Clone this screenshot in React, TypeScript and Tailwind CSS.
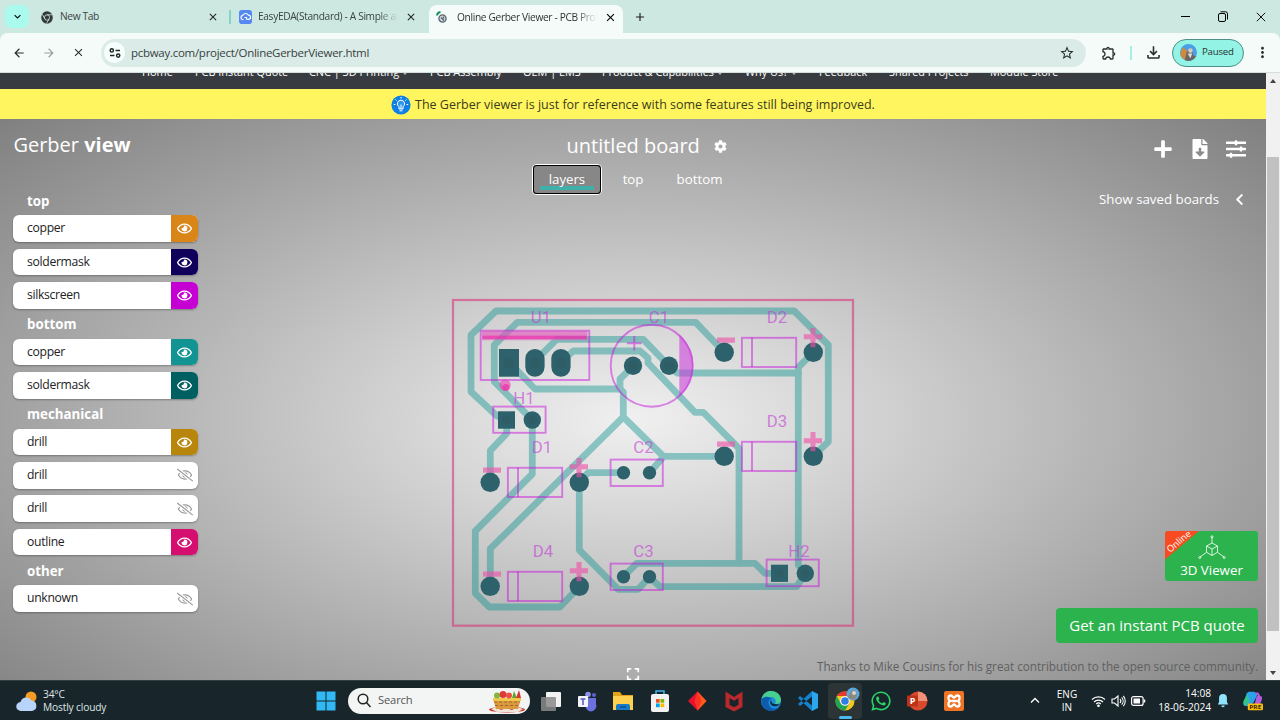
import React from "react";
import { FaCog, FaPlus, FaFileDownload, FaSlidersH, FaExpand, FaChevronLeft, FaWhatsapp, FaRegEye, FaRegEyeSlash } from "react-icons/fa";
import { MdArrowBack, MdArrowForward, MdClose, MdStarBorder, MdOutlineExtension, MdOutlineFileDownload, MdMoreVert, MdExpandMore, MdAdd } from "react-icons/md";

function ChromeGlyph() {
  return (
    <svg width="12" height="13" viewBox="0 0 24 24" preserveAspectRatio="none">
      <circle cx="12" cy="12" r="11.5" fill="#33393a" />
      <g stroke="#cde8e2" strokeWidth="1.6" fill="none">
        <circle cx="12" cy="12" r="5" />
        <path d="M12 7H22M7.7 14.5L2.5 6M16.3 14.5L11 23" />
      </g>
      <circle cx="12" cy="12" r="3.2" fill="#33393a" />
    </svg>
  );
}

function TabBar() {
  return (
    <div className="flex h-[33px] shrink-0 items-start bg-[#cde7e1] text-[10.2px] tracking-[-0.35px] text-[#3b4444]">
      <div className="mt-[5px] ml-[5px] flex h-[23px] w-[24px] items-center justify-center rounded-[7px] bg-[#abfaee] text-black">
        <MdExpandMore size={13} />
      </div>
      <div className="ml-[12px] flex h-[34px] w-[178px] items-center">
        <ChromeGlyph />
        <span className="ml-[7px] flex-1">New Tab</span>
        <MdClose size={12} className="text-[#222]" />
      </div>
      <div className="mt-[10px] ml-[10px] h-[14px] w-[2px] bg-[#7fd6c9]" />
      <div className="ml-[8px] flex h-[34px] w-[178px] items-center">
        <svg width="13" height="14" viewBox="0 0 13 15" preserveAspectRatio="none">
          <rect width="13" height="15" rx="3" fill="#5588f2" />
          <path d="M4.500 10.500H4a2.400 2.400 0 0 1-.300-4.700 3.100 3.100 0 0 1 5.700-.300 2.300 2.300 0 0 1 .600 4.500H7.500M5.500 8h2.500M7.500 10v-2" fill="none" stroke="#fff" strokeWidth="1.200" />
        </svg>
        <span className="ml-[6px] w-[140px] overflow-hidden whitespace-nowrap [mask-image:linear-gradient(to_right,black_120px,transparent)]">EasyEDA(Standard) - A Simple and</span>
        <MdClose size={12} className="ml-auto text-[#222]" />
      </div>
      <div className="mt-[5px] ml-[12px] flex h-[28px] w-[194px] items-center rounded-t-[8px] bg-[#f4fbf8] pb-[3px] pl-[7px] text-[#2c3535]">
        <svg width="13" height="14" viewBox="0 0 13 14">
          <circle cx="6.500" cy="7.500" r="3.600" fill="#ccd6dd" stroke="#59626d" strokeWidth="1.300" />
          <path d="M5 6.500l3 3M8 5.500l-1 2" stroke="#59626d" strokeWidth="1.200" />
          <path d="M1 4.500A4 4 0 0 1 4.500 1" fill="none" stroke="#128f62" strokeWidth="2" />
        </svg>
        <span className="ml-[8px] w-[140px] overflow-hidden whitespace-nowrap [mask-image:linear-gradient(to_right,black_118px,transparent)]">Online Gerber Viewer - PCB Prototype</span>
        <MdClose size={13} className="ml-[7px] text-black" />
      </div>
      <MdAdd size={14} className="mt-[10px] ml-[10px] text-[#222]" />
      <div className="mt-[10px] mr-[14px] ml-auto flex h-[13px] items-center gap-[28px] text-black">
        <div className="h-px w-[9px] bg-black" />
        <svg width="10" height="11" viewBox="0 0 10 11" fill="none" stroke="#000">
          <rect x="0.5" y="2.5" width="7" height="8" rx="1.5" />
          <path d="M2.5 0.8H7.5a2 2 0 0 1 2 2V8.5" />
        </svg>
        <svg width="10" height="10" viewBox="0 0 10 10" stroke="#111" strokeWidth="1"><path d="M.8.8l8.4 8.4M9.2.8L.8 9.2" /></svg>
      </div>
    </div>
  );
}

function Avatar({ size }: { size: number }) {
  return (
    <svg width={size} height={size} viewBox="0 0 18 18">
      <circle cx="9" cy="9" r="9" fill="#4aa0e6" />
      <path d="M1 13a9 9 0 0 1 2-9l4 2 1 6-3 5z" fill="#d08a3c" />
      <path d="M5 17l2-8 3-4 3 3 1 4 3 1a9 9 0 0 1-12 4z" fill="#6b6664" />
      <circle cx="11" cy="7" r="2.4" fill="#d9c9bb" />
      <path d="M8 10l3 5 2-5z" fill="#d8dcdc" />
    </svg>
  );
}

function Toolbar() {
  return (
    <div className="shrink-0 bg-[#cde7e1]">
      <div className="flex h-[40px] items-center rounded-t-[7px] border-b border-[#d6dedc] bg-[#f4fbf8] text-[#27302f]">
        <div className="ml-[12px] flex w-[73px] items-center justify-between">
          <MdArrowBack size={14} />
          <MdArrowForward size={14} className="text-[#98a19f]" />
          <MdClose size={13} />
        </div>
        <div className="ml-[16px] flex h-[28px] w-[985px] shrink-0 items-center rounded-full bg-[#dbece8] pr-[11px] pl-[3px]">
          <div className="flex h-[21px] w-[21px] items-center justify-center rounded-full bg-[#f7fffc]">
            <svg width="12" height="10" viewBox="0 0 12 10" fill="none" stroke="#1f2827" strokeWidth="1.5">
              <circle cx="2.8" cy="2.4" r="1.6" /><path d="M6.5 2.4H11M1 7.6H5.5" /><circle cx="9.2" cy="7.6" r="1.6" />
            </svg>
          </div>
          <span className="ml-[6px] flex-1 pt-px text-[11.5px] tracking-[-0.28px] text-[#38413f]">pcbway.com/project/OnlineGerberViewer.html</span>
          <MdStarBorder size={16} />
        </div>
        <MdOutlineExtension size={16} className="ml-[15px]" />
        <div className="ml-[13px] h-[14px] w-[2px] bg-[#a5efe4]" />
        <MdOutlineFileDownload size={19} className="ml-[12px]" />
        <div className="ml-[9px] flex h-[28px] w-[72px] items-center rounded-full border border-[#4f8f88] bg-[#93f3e5] pl-[7px] text-[9.6px] tracking-[-0.2px]">
          <Avatar size={17} />
          <span className="ml-[5px]">Paused</span>
        </div>
        <MdMoreVert size={17} className="ml-[10px]" />
      </div>
    </div>
  );
}

const nav: [string, boolean][] = [
  ["Home", false], ["PCB Instant Quote", false], ["CNC | 3D Printing", true], ["PCB Assembly", false],
  ["OEM | EMS", false], ["Product & Capabilities", true], ["Why Us?", true], ["Feedback", false],
  ["Shared Projects", false], ["Module Store", false],
];

function SiteNav() {
  return (
    <div className="grid h-[16px] shrink-0 grid-cols-[142px_53px_114px_121px_93px_79px_143px_74px_70px_101px_1fr] overflow-hidden bg-[#383c40] text-[10.9px] text-white">
      <span />
      {nav.map(([t, arrow]) => (
        <div key={t} className="-mt-[9px] whitespace-nowrap leading-[16px]">
          {t}{arrow && <span className="ml-[4px] inline-block h-[4px] w-[4px] -translate-y-[2px] rotate-45 border-r border-b border-[#bbb]" />}
        </div>
      ))}
    </div>
  );
}

function Notice() {
  return (
    <div className="flex h-[30px] shrink-0 items-center bg-[#fff65f] pt-px pl-[391px] text-[12.5px] text-[#3d3b1c]">
      <svg width="20" height="20" viewBox="0 0 20 20">
        <circle cx="10" cy="10" r="9.6" fill="#0f80e6" />
        <path d="M10 5.200a3.600 3.600 0 0 0-2 6.600v2.200h4v-2.200a3.600 3.600 0 0 0-2-6.600z" fill="#2f95ea" stroke="#fff" strokeWidth="1" />
        <path d="M10 14V9.500M8.500 15.800h3M10 2v1.600M4.500 4.500l1.100 1.100M15.500 4.500l-1.100 1.100M2.800 9.500h1.600M15.600 9.500h1.600" stroke="#fff" strokeWidth="1" />
      </svg>
      <span className="ml-[4px] pt-px">The Gerber viewer is just for reference with some features still being improved.</span>
    </div>
  );
}

type Layer = { name: string; color: string | null };
const groups: { title: string; layers: Layer[] }[] = [
  { title: "top", layers: [{ name: "copper", color: "bg-[#d98517]" }, { name: "soldermask", color: "bg-[#10005c]" }, { name: "silkscreen", color: "bg-[#c400d2]" }] },
  { title: "bottom", layers: [{ name: "copper", color: "bg-[#129592]" }, { name: "soldermask", color: "bg-[#005f61]" }] },
  { title: "mechanical", layers: [{ name: "drill", color: "bg-[#b8860b]" }, { name: "drill", color: null }, { name: "drill", color: null }, { name: "outline", color: "bg-[#d50f70]" }] },
  { title: "other", layers: [{ name: "unknown", color: null }] },
];

function Sidebar() {
  return (
    <div className="flex w-[452px] shrink-0 flex-col pl-[13.4px]">
      <h1 className="mt-[12px] h-[27px] text-[20px] leading-[27px] text-white">Gerber <b>view</b></h1>
      <div className="mt-[34px] flex w-[184.6px] flex-col">
        {groups.map((g) => (
          <div key={g.title}>
            <div className="h-[23.4px] pl-[13.6px] text-[13.3px] leading-[18px] font-bold text-white">{g.title}</div>
            {g.layers.map((l, i) => (
              <div key={i} className="mb-[6.66px] flex h-[26.67px] overflow-hidden rounded-[6px] bg-white shadow-[0_1px_2px_rgba(0,0,0,0.3)]">
                <span className="flex-1 pl-[13.6px] text-[12.2px] leading-[26px] tracking-[-0.32px] text-[#222]">{l.name}</span>
                {l.color ? (
                  <div className={"flex w-[26.5px] items-center justify-center text-white " + l.color}><FaRegEye size={15} /></div>
                ) : (
                  <div className="flex w-[26.5px] items-center justify-center text-[#999]"><FaRegEyeSlash size={16} /></div>
                )}
              </div>
            ))}
          </div>
        ))}
      </div>
    </div>
  );
}

const traces = [
  "M506 420L497 416L471 391.7V335L496 311H794.3L828.3 345V441.7L813.3 456",
  "M724 352L695.7 322.3H517.3L494.3 345V381.7L532.3 420V474L475.3 531V593.3L489.3 607H560L579.3 586.7",
  "M509 362L535 389H620L623.3 392V417L490.3 548.7V586",
  "M633 366L620 379V389",
  "M623.3 417L663.3 456.3H724M663.3 457L649.5 472.7",
  "M535 361L556.7 339.3H643.3L669 366L677 373H798.3V565L805.5 573L796.7 586.7H660L649.3 577L638.3 589.3H618.3L579.3 550V482L588.3 472.7H623.5",
  "M798.3 373V367.3L813.3 352.3",
  "M561 362L573.3 351H640L648 358V363L695 412.3H703.3L739 448.3V563.3",
  "M623.5 576.7L636.7 563.3H755L765 573.3H779",
  "M506.7 420V433.3L490.3 450.7V482",
];

const diodes = [
  { name: "D1", dx: -234, dy: 130 }, { name: "D2", dx: 0, dy: 0 },
  { name: "D3", dx: 0, dy: 104 }, { name: "D4", dx: -234, dy: 234 },
];

const labels: [string, number, number][] = [
  ["U1", 541, 317.7], ["C1", 659, 317.7], ["D2", 777, 317.7], ["H1", 524, 398], ["D3", 777, 421.7],
  ["D1", 542, 447.7], ["C2", 643.5, 447.7], ["D4", 543, 551.7], ["C3", 643.5, 551.7], ["H2", 799, 551.7],
];

function Board() {
  return (
    <svg width="410" height="336" viewBox="448 295 410 336">
      <rect x="453" y="300" width="400" height="325.7" fill="none" stroke="#d93a7c" strokeOpacity="0.62" strokeWidth="2.2" />
      <g opacity="0.43" fill="none" stroke="#0f9490" strokeWidth="6.8" strokeLinejoin="round" strokeLinecap="round">
        {traces.map((d) => <path key={d} d={d} />)}
      </g>
      <g fill="#2d626d">
        <rect x="499" y="349" width="20" height="27.7" />
        <rect x="525.3" y="349" width="19.3" height="27.7" rx="9.6" />
        <rect x="551.3" y="349" width="19.3" height="27.7" rx="9.6" />
        <circle cx="633" cy="365.7" r="9.2" /><circle cx="669" cy="365.7" r="9.2" />
        <rect x="498" y="411.3" width="17" height="17.4" /><circle cx="532.3" cy="420" r="8.7" />
        <rect x="771" y="564.7" width="17" height="17.2" /><circle cx="805.3" cy="573.3" r="8.7" />
        {[472.7, 576.7].map((y) => <g key={y}><circle cx="623.5" cy={y} r="6.7" /><circle cx="649.5" cy={y} r="6.7" /></g>)}
        {diodes.map((d) => <g key={d.name}><circle cx={724.2 + d.dx} cy={352.3 + d.dy} r="9.7" /><circle cx={813.3 + d.dx} cy={352.3 + d.dy} r="9.7" /></g>)}
      </g>
      <g fill="#2f5d66">
        <circle cx="509" cy="362.7" r="5.5" /><circle cx="535" cy="362.7" r="5.5" /><circle cx="561" cy="362.7" r="5.5" />
        <circle cx="633" cy="365.7" r="5" /><circle cx="669" cy="365.7" r="5" />
        <circle cx="506.5" cy="420" r="4.5" /><circle cx="532.3" cy="420" r="4.5" />
        <circle cx="779.5" cy="573.3" r="4.5" /><circle cx="805.3" cy="573.3" r="4.5" />
      </g>
      <g fill="none" stroke="#c814dc" strokeOpacity="0.5" strokeWidth="1.9">
        <rect x="480.7" y="330.7" width="108.6" height="49.3" />
        <circle cx="651.7" cy="365.7" r="41" />
        <path d="M634.3 336V350.6M627 343.3H641.6" />
        <rect x="493.2" y="406.6" width="52.4" height="26.2" />
        <rect x="766.6" y="559.6" width="52.2" height="26.6" />
        <rect x="610.6" y="459.6" width="52.2" height="26.4" />
        <rect x="610.6" y="563.6" width="52.2" height="26.4" />
        {diodes.map((d) => <g key={d.name}><rect x={741.9 + d.dx} y={337.8 + d.dy} width="54.3" height="29.2" /><path d={`M${752 + d.dx} ${337.8 + d.dy}v29.2`} /></g>)}
      </g>
      <path d="M679.3 334.5A41.8 41.8 0 0 1 679.3 396.9Z" fill="#cc35dc" fillOpacity="0.55" />
      <rect x="482" y="331" width="105.5" height="9.2" fill="#e454bc" fillOpacity="0.6" />
      <rect x="482.5" y="335.6" width="104" height="3.4" fill="#ef26a8" fillOpacity="0.6" />
      <circle cx="505" cy="385" r="5.7" fill="#ec45b4" fillOpacity="0.65" />
      <circle cx="506" cy="387.5" r="3.5" fill="#f222a6" fillOpacity="0.6" />
      <g fill="#ee4fa8" fillOpacity="0.62">
        {diodes.map((d) => (
          <g key={d.name}>
            <rect x={717 + d.dx} y={337.5 + d.dy} width="18" height="5.2" />
            <path d={`M${810.5 + d.dx} ${328 + d.dy}h5v6.3h6.5v5h-6.5v8h-5v-8h-6.7v-5h6.7z`} />
          </g>
        ))}
      </g>
      <g fill="#c438d6" fillOpacity="0.62" className="font-[Roboto] font-normal" fontSize="16.8" textAnchor="middle">
        {labels.map(([t, x, y]) => <text key={t} x={x} y={y + 5.7}>{t}</text>)}
      </g>
    </svg>
  );
}

function Center() {
  return (
    <div className="flex w-[402px] shrink-0 flex-col">
      <div className="mt-[13px] flex h-[27px] items-center pl-[114.5px] text-[20px] leading-[27px] text-white">
        untitled board
        <FaCog size={13} className="mt-[1px] ml-[14px]" />
      </div>
      <div className="mt-[5px] flex h-[32px] items-center pl-[80px] text-[13.3px] text-white">
        <div className="flex h-[31px] w-[70px] flex-col items-center rounded-[4px] border border-white bg-black p-px">
          <div className="flex h-full w-full flex-col items-center rounded-[3px] bg-[#878787]">
            <div className="mt-[20px] h-[4px] w-[54px] shrink-0 bg-[#3fb0aa]" />
            <span className="-mt-[24px] h-[27px] leading-[27px] tracking-[-0.05px]">layers</span>
          </div>
        </div>
        <span className="w-[62px] pt-px text-center tracking-[-0.05px]">top</span>
        <span className="w-[71px] pt-px text-center">bottom</span>
      </div>
      <div className="mt-[100px] -ml-[4px] w-[410px]"><Board /></div>
      <FaExpand size={14} className="mt-[36px] ml-[174px] shrink-0 text-white" />
    </div>
  );
}

function CubeIcon() {
  return (
    <svg width="28" height="25" viewBox="0 0 28 25" fill="none" stroke="#fff" strokeWidth="0.9" strokeOpacity="0.9" className="shrink-0">
      <path d="M14 8l5.5 3v6.3L14 20.5l-5.500-3.200V11zM8.500 11L14 14l5.500-3M14 14v6.500M14 8V2M8.500 17.300L2 22M19.500 17.300L26 22" />
      <circle cx="14" cy="1.800" r="1" /><circle cx="1.800" cy="22.500" r="1" /><circle cx="26.200" cy="22.500" r="1" />
    </svg>
  );
}

function RightPanel() {
  return (
    <div className="flex min-w-0 flex-1 flex-col items-end pr-[8px] text-white">
      <div className="mt-[19px] mr-[12px] flex h-[22px] items-center gap-[16.5px]">
        <FaPlus size={20} />
        <FaFileDownload size={20} />
        <FaSlidersH size={20} />
      </div>
      <div className="mt-[28px] mr-[12px] flex h-[22px] items-center text-[13.3px]">
        <span className="pt-px">Show saved boards</span> <FaChevronLeft size={13} className="ml-[14px]" />
      </div>
      <div className="relative mt-[321px] flex h-[50px] w-[93px] shrink-0 flex-col items-center overflow-hidden rounded-[3px] bg-[#2db34e] pt-[4px]">
        <svg className="absolute top-0 left-0" width="36" height="30" viewBox="0 0 36 30">
          <path d="M0 0H34L0 28.500Z" fill="#f84b22" />
          <text x="5" y="22" fontSize="9.200" fill="#fff" transform="rotate(-40 5 22)" className="font-['Open_Sans']">Online</text>
        </svg>
        <CubeIcon />
        <span className="text-[13.3px] leading-[21px]">3D Viewer</span>
      </div>
      <div className="mt-[26.500px] flex h-[35px] w-[202px] shrink-0 items-center justify-center rounded-[4px] bg-[#2db34e] text-[15px]">Get an instant PCB quote</div>
      <div className="mt-[13.500px] text-[11.7px] leading-[20px] whitespace-nowrap text-[#606060]">Thanks to Mike Cousins for his great contribution to the open source community.</div>
    </div>
  );
}

function Scrollbar() {
  return (
    <div className="flex w-[14px] shrink-0 flex-col items-center bg-[#f1f1f1]">
      <div className="mt-[6px] h-0 w-0 border-x-[3px] border-b-[4px] border-x-transparent border-b-[#444]" />
      <div className="mt-[74px] h-[474px] w-[12px] bg-[#c1c1c1]" />
      <div className="mt-[40px] h-0 w-0 border-x-[3px] border-t-[4px] border-x-transparent border-t-[#444]" />
    </div>
  );
}

function Taskbar() {
  return (
    <div className="flex h-[40px] shrink-0 items-center border-t border-[#304040] bg-[#18252a] text-white">
      <div className="flex w-[316px] items-center pl-[16px]">
        <svg width="22" height="24" viewBox="0 0 22 24">
          <circle cx="15" cy="8" r="5.500" fill="#f59a23" />
          <path d="M5 22a4.500 4.500 0 0 1-.500-9 6 6 0 0 1 11-1.500A5.300 5.300 0 0 1 16 22z" fill="#b9d4fb" />
        </svg>
        <div className="ml-[5px] text-[10.2px] leading-[13px] tracking-[-0.15px] text-[#dfe5e6]"><div>34°C</div><div>Mostly cloudy</div></div>
      </div>
      <svg width="20" height="20" viewBox="0 0 20 20" fill="#31b9f5"><path d="M.500.500H9.500V9.500H.500zM10.500.500h9V9.500h-9zM.500 10.500h9v9h-9zM10.500 10.500h9v9h-9z" /></svg>
      <div className="ml-[12px] flex h-[26px] w-[182px] shrink-0 items-center rounded-full bg-[#f3f4f4] pr-[4px] pl-[9px] text-[11.2px] tracking-[-0.15px] text-[#555]">
        <svg width="14" height="15" viewBox="0 0 14 15" fill="none" stroke="#222" strokeWidth="1.500"><circle cx="6" cy="6" r="4.800" /><path d="M9.500 9.500l4 4.500" /></svg>
        <span className="ml-[7px] flex-1">Search</span>
        <svg width="38" height="24" viewBox="0 0 38 24">
          <ellipse cx="19" cy="20.500" rx="18" ry="3" fill="#c93b34" />
          <path d="M3 20l5-2 5 3 5-2 6 2 5-3 6 2-5 3H9z" fill="#eee5d8" />
          <path d="M5 9h28l-3 11H8z" fill="#d99a3e" />
          <path d="M6 13h26M7 16.500h24" stroke="#a8642a" strokeDasharray="3 2" />
          <path d="M5 9h28v3H5z" fill="#f0c94c" />
          <circle cx="9" cy="6.500" r="3" fill="#84b83c" /><circle cx="15" cy="5.500" r="3.500" fill="#df3b36" /><circle cx="21" cy="6.500" r="3" fill="#e9523f" />
          <path d="M24 9l2-7 3 7z" fill="#5ca52d" /><path d="M28 9l3-8 2 8z" fill="#d8332e" />
        </svg>
      </div>
      <div className="ml-[7px] flex items-center">
        <svg width="30" height="26" viewBox="0 0 30 26"><rect x="9" y="4" width="15" height="15" rx="1" fill="#f2f2f2" /><rect x="4" y="9" width="15" height="14" rx="1" fill="#8a8a8a" opacity=".85" /></svg>
        <svg className="ml-[9px]" width="22" height="22" viewBox="0 0 22 22"><circle cx="12" cy="4.500" r="2.800" fill="#8b90ea" /><circle cx="18" cy="5" r="2" fill="#5d63cf" /><path d="M8 8h12v6a5 5 0 0 1-10 4z" fill="#6c71dd" /><rect x="2" y="6" width="10" height="11" rx="1" fill="#f4f4ff" /><path d="M4.500 9h5M7 9v6" stroke="#5157c2" strokeWidth="1.500" /></svg>
        <svg className="ml-[14px]" width="22" height="22" viewBox="0 0 22 22"><path d="M1 2h7l2 3h11v15H1z" fill="#e3a21a" /><path d="M1 6h20v14H1z" fill="#ffd04f" /><path d="M4 20v-4a2 2 0 0 1 2-2h10a2 2 0 0 1 2 2v4z" fill="#1879c9" /><path d="M8 17h6" stroke="#0a4f91" strokeWidth="1.500" /></svg>
        <svg className="ml-[15px]" width="22" height="24" viewBox="0 0 22 24"><path d="M7 6V2h8v4" stroke="#41b5ee" strokeWidth="1.500" fill="none" /><rect x="2" y="5" width="18" height="18" rx="2" fill="#f2f2f2" /><path d="M7 10h3.700v3.700H7z" fill="#f05022" /><path d="M11.500 10h3.700v3.700h-3.700z" fill="#7fba00" /><path d="M7 14.500h3.700v3.700H7z" fill="#00a4ef" /><path d="M11.500 14.500h3.700v3.700h-3.700z" fill="#ffb900" /></svg>
        <svg className="ml-[15px]" width="22" height="24" viewBox="0 0 22 24"><path d="M11.500 2.500l9 9.500-9 9.500L2 12z" fill="#e8112f" /><path d="M11.500 2.500l9 9.500-9 9.500z" fill="#ff5a1a" /><path d="M11.500 2.500l4 9.500-4 9.500-3-9.500z" fill="#fb3326" /></svg>
        <svg className="ml-[15px]" width="22" height="24" viewBox="0 0 22 24"><path d="M2.500 2.500l8.500 5.500 8.500-5.500v15.500L11 22.500l-8.500-4.500zM6.500 9v6.800l4.500 2.500 4.500-2.500v-6.800L11 11.800z" fill="#b9282d" fillRule="evenodd" /></svg>
        <svg className="ml-[15px]" width="22" height="24" viewBox="0 0 22 24"><circle cx="11" cy="12" r="10" fill="#1b8fdc" /><path d="M1.500 10C3 4 7 2 11 2c6 0 10 4 10 9 0 3-3 4.500-6 4 2-3 0-7-4-7-5 0-8 2-9.500 2z" fill="#48cf8e" /><path d="M1.500 10c4-4 9-2 10 0-4 0-4 6 0 9 3 1.500 6 0 8-1-4 5-10 5-14 2-3-2-4.500-6-4-10z" fill="#0d5cae" /><path d="M12 10c-2 2 0 5 3 5l5 .500C17 18 12 18 10.500 15c-1-2 0-4 1.500-5z" fill="#102e42" /></svg>
        <svg className="ml-[15px]" width="22" height="24" viewBox="0 0 22 24"><path d="M15 2l6 3v14l-6 3z" fill="#2ba6ee" /><path d="M15 2L1 15l2 2L15 7.500zM15 22L1 9l2-2 12 9.500z" fill="#1282cc" /></svg>
      </div>
      <div className="ml-[9px] flex h-[36px] w-[34px] shrink-0 flex-col items-center rounded-[4px] bg-[#2c3436] pt-[6px]">
        <svg width="26" height="24" viewBox="0 0 26 24" className="-mt-[2px] ml-[4px] shrink-0">
          <circle cx="11" cy="14" r="9.500" fill="#f7c51e" />
          <path d="M2.800 9A9.500 9.500 0 0 1 19.200 9H11z" fill="#e33b2e" />
          <path d="M2.800 9A9.500 9.500 0 0 0 11 23.500l4.300-7L6.700 16.500z" fill="#23a455" />
          <circle cx="11" cy="14" r="4.800" fill="#fff" /><circle cx="11" cy="14" r="3.800" fill="#2f7de6" />
          <g transform="translate(12 0)"><circle cx="7" cy="7" r="6.500" fill="#5aa7dc" /><path d="M2 11l3-7 4-1 2 6-3 4z" fill="#8c8780" /><circle cx="8" cy="6" r="2" fill="#ddd3ca" /></g>
        </svg>
        <div className="mt-[5px] h-[3px] w-[13px] shrink-0 rounded bg-[#4cb8f0]" />
      </div>
      <FaWhatsapp size={22} className="ml-[8px] shrink-0 text-[#2ad366]" />
      <svg className="ml-[14px] shrink-0" width="22" height="22" viewBox="0 0 22 22"><circle cx="12" cy="11" r="9.500" fill="#d9492b" /><path d="M12 1.500A9.500 9.500 0 0 1 21.500 11H12z" fill="#f29179" /><rect x="1" y="5.500" width="11" height="11" rx="1" fill="#bd3318" /><text x="3.700" y="14.300" fontSize="9" fontWeight="700" fill="#fff">P</text></svg>
      <svg className="ml-[15px] shrink-0" width="22" height="22" viewBox="0 0 22 22">
        <rect x="1" y="1" width="20" height="20" rx="2" fill="#ee7324" />
        <path d="M7.800 5.500C9.500 5.500 10 7.500 11 7.500S12.500 5.500 14.200 5.500C17 5.500 17.500 9.500 15 11C17.500 12.500 17 16.500 14.200 16.500C12.500 16.500 12 14.500 11 14.500S9.500 16.500 7.800 16.500C5 16.500 4.500 12.500 7 11C4.500 9.500 5 5.500 7.800 5.500ZM8.500 11H13.500" fill="none" stroke="#fff" strokeWidth="2.300" />
      </svg>
      <svg className="ml-[65px] shrink-0" width="10" height="7" viewBox="0 0 10 7" fill="none" stroke="#fff" strokeWidth="1.300"><path d="M1 5.500l4-4 4 4" /></svg>
      <div className="ml-[16px] w-[22px] shrink-0 text-center text-[10px] leading-[13px]"><div>ENG</div><div>IN</div></div>
      <svg className="ml-[13px] shrink-0" width="15" height="12" viewBox="0 0 15 12" fill="none" stroke="#fff" strokeWidth="1.200"><path d="M1 4.500a9.500 9.500 0 0 1 13 0M3 7a6.500 6.500 0 0 1 9 0M5.200 9a3.500 3.500 0 0 1 4.600 0" /><circle cx="7.500" cy="10.800" r=".700" fill="#fff" /></svg>
      <svg className="ml-[5px] shrink-0" width="15" height="14" viewBox="0 0 15 14" fill="none" stroke="#fff" strokeWidth="1.100"><path d="M1 5h2.500L7 2v10L3.500 9H1zM9 5a3 3 0 0 1 0 4M10.700 3.300a5.500 5.500 0 0 1 0 7.400M12.300 1.800a8 8 0 0 1 0 10.400" /></svg>
      <svg className="ml-[5px] shrink-0" width="15" height="10" viewBox="0 0 15 10"><rect x=".600" y=".600" width="11.500" height="8.800" rx="2" fill="none" stroke="#fff" strokeWidth="1.200" /><rect x="2.500" y="2.500" width="6.500" height="5" fill="#fff" /><path d="M13.500 3.500v3" stroke="#fff" strokeWidth="1.500" /></svg>
      <div className="w-[65px] shrink-0 text-right text-[10.2px] leading-[13.5px] tracking-[-0.05px]"><div>14:08</div><div>18-06-2024</div></div>
      <svg className="ml-[6px] shrink-0" width="12" height="14" viewBox="0 0 12 16" fill="#8fe4fb"><path d="M6 0a4.500 4.500 0 0 1 4.500 4.500V9l1.500 3H0l1.500-3V4.500A4.500 4.500 0 0 1 6 0zM4 13h4a2 2 0 0 1-4 0z" /></svg>
      <svg className="ml-[14px] shrink-0" width="20" height="21" viewBox="0 0 21 25" preserveAspectRatio="none"><path d="M6 2h6l3 4-4 9-4 4H3c-3 0-3-3-2-6l3-9z" fill="#2ba3ec" /><path d="M12 3h3c2 0 2 2 3 4 3 0 2 4 1 7l-2 5h-7c3-2 3-6 4-10 0-2 1-2 2-2z" fill="#b75be0" /><path d="M1 12l4-7 2 9-4 5c-3-1-3-4-2-7z" fill="#32c58b" /><rect x="5" y="16" width="16" height="8" rx="1.500" fill="#fbbf13" /><text x="6.500" y="22.500" fontSize="7" fontWeight="700" fill="#3a2a00">PRE</text></svg>
    </div>
  );
}

export default function App() {
  return (
    <div className="flex h-[720px] w-[1280px] flex-col overflow-hidden font-['Open_Sans','Noto_Sans',sans-serif]">
      <TabBar />
      <Toolbar />
      <div className="flex h-[607px] shrink-0 overflow-hidden">
        <div className="flex w-[1266px] flex-col">
          <SiteNav />
          <Notice />
          <main className="flex h-[561px] overflow-hidden bg-[radial-gradient(ellipse_895px_424px_at_633px_300px,#f0f0f0,#808080)]">
            <Sidebar />
            <Center />
            <RightPanel />
          </main>
        </div>
        <Scrollbar />
      </div>
      <Taskbar />
    </div>
  );
}
